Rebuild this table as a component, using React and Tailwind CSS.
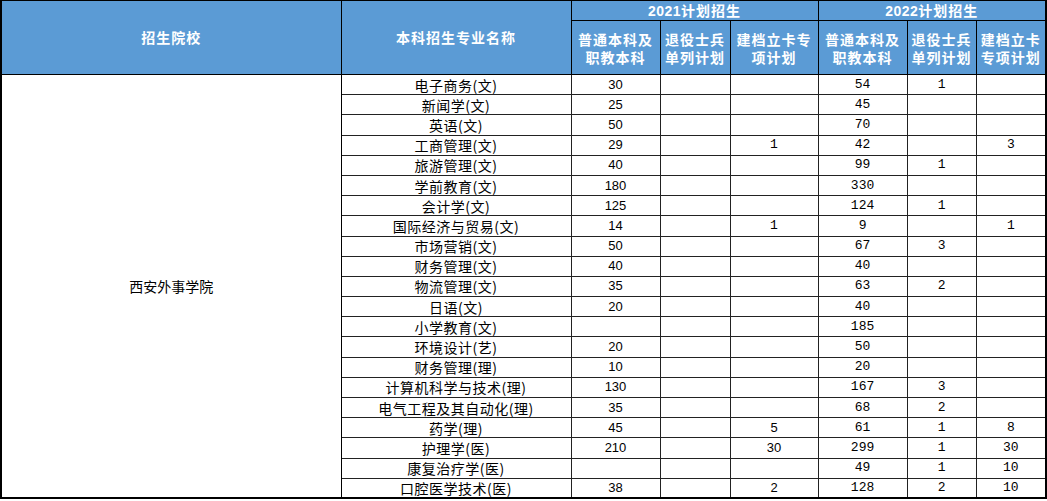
import React from "react";

const rows = [
  ["电子商务(文)", "30", "", "", "54", "1", ""],
  ["新闻学(文)", "25", "", "", "45", "", ""],
  ["英语(文)", "50", "", "", "70", "", ""],
  ["工商管理(文)", "29", "", "1", "42", "", "3"],
  ["旅游管理(文)", "40", "", "", "99", "1", ""],
  ["学前教育(文)", "180", "", "", "330", "", ""],
  ["会计学(文)", "125", "", "", "124", "1", ""],
  ["国际经济与贸易(文)", "14", "", "1", "9", "", "1"],
  ["市场营销(文)", "50", "", "", "67", "3", ""],
  ["财务管理(文)", "40", "", "", "40", "", ""],
  ["物流管理(文)", "35", "", "", "63", "2", ""],
  ["日语(文)", "20", "", "", "40", "", ""],
  ["小学教育(文)", "", "", "", "185", "", ""],
  ["环境设计(艺)", "20", "", "", "50", "", ""],
  ["财务管理(理)", "10", "", "", "20", "", ""],
  ["计算机科学与技术(理)", "130", "", "", "167", "3", ""],
  ["电气工程及其自动化(理)", "35", "", "", "68", "2", ""],
  ["药学(理)", "45", "", "5", "61", "1", "8"],
  ["护理学(医)", "210", "", "30", "299", "1", "30"],
  ["康复治疗学(医)", "", "", "", "49", "1", "10"],
  ["口腔医学技术(医)", "38", "", "2", "128", "2", "10"],
];

const cjk = { fontFamily: '"Noto Sans CJK SC", "Noto Sans", sans-serif' };
const sans = { fontFamily: '"Liberation Sans", Arial, sans-serif' };
const mono = { fontFamily: '"Liberation Mono", "DejaVu Sans Mono", monospace' };

function cellFont(ci, v) {
  if (ci === 1 || ci === 2) return sans;
  if (ci === 3) return v === "1" ? mono : sans;
  return mono;
}

export default function App() {
  const th = "border border-black bg-[#5b9bd5] text-white font-bold text-[14px] text-center align-middle p-0 tracking-[1px]";
  const sub = th + " leading-[18px] pt-[1px]";
  return (
    <div className="w-[1047px] h-[501px] bg-white overflow-hidden" style={cjk}>
      <table className="table-fixed border-collapse w-[1045px] border-x-2 border-b-2 border-t border-black">
        <colgroup>
          <col className="w-[340px]" />
          <col className="w-[230px]" />
          <col className="w-[89px]" />
          <col className="w-[70px]" />
          <col className="w-[88px]" />
          <col className="w-[89px]" />
          <col className="w-[69px]" />
          <col className="w-[70px]" />
        </colgroup>
        <thead>
          <tr className="h-[20px]">
            <th rowSpan={2} className={th}>招生院校</th>
            <th rowSpan={2} className={th}>本科招生专业名称</th>
            <th colSpan={3} className={th + " leading-[18px]"}>
              <span style={sans} className="tracking-[0.5px]">2021</span>计划招生
            </th>
            <th colSpan={3} className={th + " leading-[18px]"}>
              <span style={sans} className="tracking-[0.5px]">2022</span>计划招生
            </th>
          </tr>
          <tr className="h-[54px]">
            <th className={sub}>普通本科及<br />职教本科</th>
            <th className={sub}>退役士兵<br />单列计划</th>
            <th className={sub}>建档立卡专<br />项计划</th>
            <th className={sub}>普通本科及<br />职教本科</th>
            <th className={sub}>退役士兵<br />单列计划</th>
            <th className={sub}>建档立卡<br />专项计划</th>
          </tr>
        </thead>
        <tbody>
          {rows.map((r, ri) => (
            <tr key={ri} className="h-[20.2px]">
              {ri === 0 && (
                <td rowSpan={rows.length} className="border border-black text-center align-middle text-[14px] text-black p-0">
                  西安外事学院
                </td>
              )}
              {r.map((v, ci) =>
                ci === 0 ? (
                  <td key={ci} className="border border-[#222] text-center align-middle text-[14px] leading-[18px] text-black p-0 tracking-[0.5px]">
                    {v}
                  </td>
                ) : (
                  <td key={ci} className="border border-[#222] text-center align-middle text-[13px] leading-[18px] text-black p-0" style={cellFont(ci, v)}>
                    {v}
                  </td>
                )
              )}
            </tr>
          ))}
        </tbody>
      </table>
    </div>
  );
}
